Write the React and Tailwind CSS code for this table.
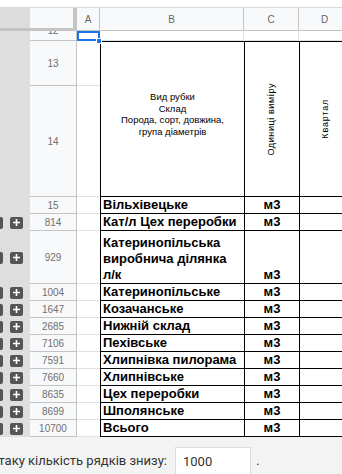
import React from "react";

const FONT = "font-['Liberation_Sans',Arial,sans-serif]";

function GroupBtns({ show }) {
  if (!show) return <div className="w-[30px] shrink-0 bg-[#dedede]" />;
  return (
    <div className="w-[30px] shrink-0 bg-[#dedede] flex items-center overflow-hidden">
      <div className="w-[3px] h-[12px] rounded-r-[2px] bg-[#555]" />
      <div className="ml-[7px] w-[13px] h-[12px] rounded-[2px] bg-[#555] flex items-center justify-center">
        <svg width="9" height="9" viewBox="0 0 9 9">
          <path d="M4.5 1v7M1 4.5h7" stroke="#fff" strokeWidth="1.6" />
        </svg>
      </div>
    </div>
  );
}

function RowNum({ n, h }) {
  return (
    <div
      className={`w-[47px] shrink-0 bg-[#f8f9fa] border-r border-b border-[#c4c4c4] flex items-center justify-center text-[10px] text-[#707070] ${h}`}
    >
      {n}
    </div>
  );
}

function DataRow({ n, name, h = "h-[17px]", btn = true }) {
  return (
    <div className={`flex ${h}`}>
      <GroupBtns show={btn} />
      <RowNum n={n} h={h} />
      <div className="w-[23px] shrink-0 border-b border-[#e2e2e2] bg-white" />
      <div className="w-[144px] shrink-0 border-l border-b border-black bg-white flex items-end pl-[2px] text-[13px] leading-[16px] font-bold text-black">
        <div>{name}</div>
      </div>
      <div className="w-[55px] shrink-0 border-l border-b border-black bg-white flex items-end justify-center text-[13px] leading-[16px] font-bold text-black">
        м3
      </div>
      <div className="w-[52px] shrink-0 border-l border-b border-black bg-white" />
    </div>
  );
}

export default function App() {
  return (
    <div className={`w-[342px] h-[474px] overflow-hidden bg-white ${FONT}`}>
      <div className="w-[400px]">
        <div className="h-[7px] bg-white" />
        {/* column header */}
        <div className="flex h-[24px] border-t border-[#dadada]">
          <div className="w-[30px] shrink-0 bg-[#dcdcdc] border-b-[3px] border-[#c4c4c4]" />
          <div className="w-[43px] shrink-0 bg-[#f8f9fa] border-b-[3px] border-[#c4c4c4]" />
          <div className="w-[4px] shrink-0 bg-[#c4c4c4]" />
          <div className="w-[23px] shrink-0 bg-[#f8f9fa] border-b border-r border-[#c4c4c4] flex items-center justify-center text-[10px] text-[#666]">A</div>
          <div className="w-[144px] shrink-0 bg-[#f8f9fa] border-b border-r border-[#c4c4c4] flex items-center justify-center text-[10px] text-[#666]">B</div>
          <div className="w-[55px] shrink-0 bg-[#f8f9fa] border-b border-r border-[#c4c4c4] flex items-center justify-center text-[10px] text-[#666]">C</div>
          <div className="w-[52px] shrink-0 bg-[#f8f9fa] border-b border-r border-[#c4c4c4] flex items-center justify-center text-[10px] text-[#666]">D</div>
        </div>
        {/* row 12 */}
        <div className="flex h-[10px]">
          <div className="w-[30px] shrink-0 bg-[#dedede]" />
          <div className="w-[47px] shrink-0 bg-[#f8f9fa] border-r border-b border-[#c4c4c4] overflow-hidden flex justify-center">
            <div className="text-[10px] leading-[10px] text-[#707070] -mt-[5px]">12</div>
          </div>
          <div className="w-[23px] shrink-0 relative border-2 border-[#1a73e8] bg-white">
            <div className="absolute -right-[4px] -bottom-[5px] w-[6px] h-[6px] bg-[#1a73e8] border border-white" />
          </div>
          <div className="w-[144px] shrink-0 border-b border-r border-[#e2e2e2]" />
          <div className="w-[55px] shrink-0 border-b border-r border-[#e2e2e2]" />
          <div className="w-[52px] shrink-0 border-b border-[#e2e2e2]" />
        </div>
        {/* rows 13-14 merged header */}
        <div className="flex h-[156px]">
          <div className="w-[30px] shrink-0 bg-[#dedede]" />
          <div className="flex flex-col">
            <RowNum n="13" h="h-[45px]" />
            <RowNum n="14" h="h-[111px]" />
          </div>
          <div className="flex flex-col w-[23px] shrink-0">
            <div className="h-[45px] border-b border-[#e2e2e2]" />
            <div className="h-[111px] border-b border-[#e2e2e2]" />
          </div>
          <div className="w-[144px] shrink-0 border-l border-t border-b border-black flex items-center justify-center pb-[10px]">
            <div className="text-center text-[9.5px] leading-[11.5px] text-black">
              Вид рубки
              <br />
              Склад
              <br />
              Порода, сорт, довжина,
              <br />
              група діаметрів
            </div>
          </div>
          <div className="w-[55px] shrink-0 border-l border-t border-b border-black flex items-center justify-center">
            <div className="[writing-mode:vertical-rl] rotate-180 text-[9px] tracking-[0.6px] text-black">
              Одиниці виміру
            </div>
          </div>
          <div className="w-[52px] shrink-0 border-l border-t border-b border-black flex items-center justify-center">
            <div className="[writing-mode:vertical-rl] rotate-180 text-[9px] tracking-[0.8px] text-black">
              Квартал
            </div>
          </div>
        </div>
        <DataRow n="15" name="Вільхівецьке" btn={false} />
        <DataRow n="814" name="Кат/л Цех переробки" />
        <DataRow
          n="929"
          h="h-[53px]"
          name={
            <>
              Катеринопільська
              <br />
              виробнича ділянка
              <br />
              л/к
            </>
          }
        />
        <DataRow n="1004" name="Катеринопільське" />
        <DataRow n="1647" name="Козачанське" />
        <DataRow n="2685" name="Нижній склад" />
        <DataRow n="7106" name="Пехівське" />
        <DataRow n="7591" name="Хлипнівка пилорама" />
        <DataRow n="7660" name="Хлипнівське" />
        <DataRow n="8635" name="Цех переробки" />
        <DataRow n="8699" name="Шполянське" />
        <DataRow n="10700" name="Всього" />
        {/* bottom bar */}
        <div className="h-[37px] bg-[#f3f3f3] flex items-start pt-[10px]">
          <div className="w-[167px] shrink-0 overflow-hidden flex justify-end">
            <div className="shrink-0 whitespace-nowrap text-[13px] leading-[27px] text-[#333] font-['Roboto',Arial,sans-serif]">
              Додати ще таку кількість рядків знизу:
            </div>
          </div>
          <div className="ml-[8px] w-[76px] h-[30px] bg-white border border-[#dcdcdc] pl-[7px] text-[13px] leading-[27px] text-[#333] font-['Roboto',Arial,sans-serif]">
            1000
          </div>
          <div className="ml-[5px] text-[13px] leading-[27px] text-[#333]">.</div>
        </div>
      </div>
    </div>
  );
}
